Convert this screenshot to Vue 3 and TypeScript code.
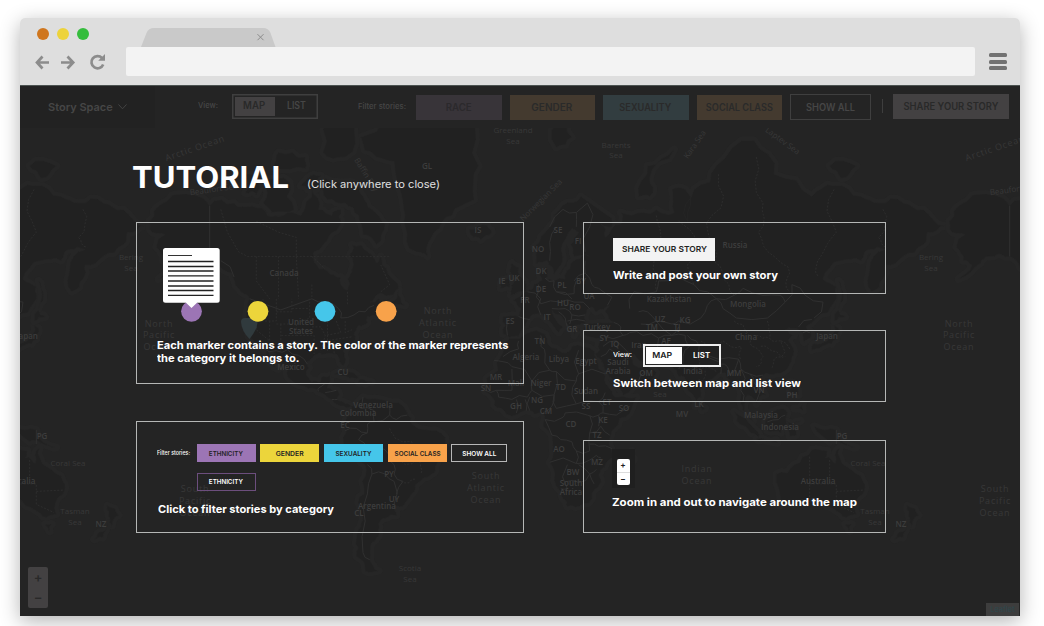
<script setup lang="ts">
import type { Directive } from 'vue'

type Point = [number, number]

// Stretches a label horizontally so that it occupies the given width.
const vFit: Directive<HTMLElement, number> = {
  mounted(el, { value }) {
    const natural = el.getBoundingClientRect().width
    if (natural > 0) el.style.transform = `scaleX(${value / natural})`
  },
}

const project = ([lon, lat]: Point): Point => [
  523 + lon * 2.2222,
  424 - 127.3 * Math.log(Math.tan(Math.PI / 4 + (lat * Math.PI) / 360)),
]

const noise = (x: number, y: number): number => {
  const n = Math.sin(x * 12.9898 + y * 78.233) * 43758.5453
  return n - Math.floor(n) - 0.5
}

const roughen = (pts: Point[], depth: number): Point[] => {
  if (depth === 0) return pts
  const out: Point[] = []
  for (let i = 0; i < pts.length - 1; i++) {
    const [ax, ay] = pts[i]
    const [bx, by] = pts[i + 1]
    const d = noise(ax + bx, ay + by) * 0.42
    out.push([ax, ay], [(ax + bx) / 2 - (by - ay) * d, (ay + by) / 2 + (bx - ax) * d])
  }
  out.push(pts[pts.length - 1])
  return roughen(out, depth - 1)
}

const parse = (s: string): Point[] =>
  s.split(' ').map((p) => p.split(',').map(Number) as Point)

const toPath = (s: string, closed: boolean, depth: number): string => {
  const pts = parse(s).map(project)
  if (closed) pts.push(pts[0])
  return 'M' + roughen(pts, depth).map(([x, y]) => `${x.toFixed(1)} ${y.toFixed(1)}`).join('L') + (closed ? 'Z' : '')
}

const land = [
  '-168,65.6 -166,68 -162,70 -156,71.3 -141,69.6 -130,70 -122,69.5 -115,68 -108,68 -100,68 -95,72 -92,69 -86,68 -82,69 -82,66.5 -87,64.5 -94,61 -94,58.7 -88,56.5 -82,55 -82,53 -79,51.5 -79,54.5 -77,57 -78,60 -77,62.5 -70,61 -66,58.5 -64,60 -61,56 -56,52 -60,50 -66,50 -69,48 -65,49 -64,46 -60,46 -66,43.5 -70,43.5 -70,41.5 -74,40.5 -76,37 -76,35 -81,31.5 -80,26.5 -81,25.2 -82.5,28 -84,30 -89,30 -94,29.5 -97.3,27 -97.5,22 -95,18.5 -91,18.7 -90,21 -87,21.3 -88,16 -83.5,15 -83.5,11 -80,9 -77.5,8 -80,7.5 -83,8.5 -86,11 -91,14 -95,16 -101,17.3 -105.5,20.3 -106,23 -109,26 -113,31 -114.5,31 -110,24 -112,26 -115,29 -117,32.5 -120.5,34.5 -124,40 -124,46 -123,49 -128,52 -131,56 -137,58.5 -145,60.5 -151,60 -154,58.5 -164,54.5 -158,58 -162,59 -165,62 -161,64.5',
  '-77.5,8 -72,12 -62,10.5 -52,5 -50,0 -44,-2.5 -35,-6 -35,-9 -39,-14 -39,-18 -41,-22 -48,-26 -49,-29 -53.5,-34 -58,-34.5 -57,-38 -62,-39 -65,-41 -65,-45 -68,-47 -69,-52 -65,-55 -71,-55 -75,-51 -75,-46 -73,-42 -73.5,-37 -71.5,-30 -70.5,-20 -76,-14 -81,-6 -80,-2 -80,1 -77,4',
  '-73,78 -66,76 -58,75.5 -54,70 -53,66 -48,61 -43,60 -40,65 -32,68 -22,70.5 -20,75 -18,80 -60,82',
  '-78,73 -72,71 -68,69 -62,66.5 -66,62.5 -72,64.5 -74,68 -80,70 -88,70.5 -89,73.5',
  '-117,73 -105,73 -103,69 -113,68.5 -117,70',
  '-125,74 -118,74.5 -120,71.3 -125,71.5',
  '-90,76.5 -80,76 -76,79 -90,80.5', '-110,76.5 -98,76 -98,74.7 -112,74.8', '-97,73.5 -91,73.8 -93,72 -100,72.5',
  '-24,65.5 -16,66.3 -14,65 -19,63.5 -22.5,64',
  '-5.5,50 1,51 1.5,53 -2,56 -2,57.5 -5,58.5 -6,56.5 -3,54.5 -5,52', '-10,52 -6,52.3 -6,55 -9.5,54.2',
  '-9,43.5 -2,43.5 -1,46 -4.5,48.5 2,51 5,53.2 8.5,54 8.3,57 10.5,57.5 10,54.5 14,54 19,54.5 21,57 24,59.3 30,60 23,60 21.5,62.5 25,65 22,65.7 17.3,61.5 17,58 14,55.5 11,59 6,58.3 5,62 12,66 18,69.7 26,71 40,67.5 40,66 35,66.5 37,64 44,66.5 44,68.5 54,68.5 60,69 68,68.5 67,72 73,72 74,67 77,72 87,75 104,77.7 113,74 130,71 140,72.5 152,71 160,70 171,70 180,69 190,66.2 182,65 180,62.5 171,60 163,58 162,54.5 157,51 156,57 163,61.5 156,61.5 152,59 143,59 135,54.5 141,52.5 140,48 132,43 127.5,40 129.3,36 126.5,34.5 126,38 121.5,39.5 118,39 122,37 119.5,35 122,31 120,26 114,22.3 108,21.5 106,19 109,13 105,9 101,13 99.5,9 103.5,1.5 100.5,5 98,9 97,17 91,22.5 87,21.5 80,15.5 80,12 77.5,8 73,17 72.5,21 70,21 67,25 57,26 56,27 50,30 48,30 51,25 56,26 60,22.5 55,17.5 45,12.8 42.5,16 39,21 35,28 32.5,30 34.5,31.5 36,36.5 30,36.5 27,38 29,41 41,41.5 37,45 39,47 33,45 31,46.5 28,44 28,41 23,40.5 23,37 19.5,41.5 13,45.5 18,40 16,38 12,42 8.5,44.4 3,43 0,39.5 -2,36.7 -6,36.2 -9,37.5',
  '-6,35.8 10,37.3 11,34 19,30.3 22,33 32,31.2 33,28 37,21 39,15.5 43,12 51,12 48,5 41,-2 39,-7 40.5,-15 35,-20 35,-24 32.5,-28 27,-33.8 20,-34.8 18,-32 15,-27 12,-17 13.5,-10 9,-1 9.5,4 5,4.5 2,6.3 -7.5,4.5 -13,8.5 -17,14.5 -16.5,20 -10,29',
  '44,-25 50,-15.5 49,-12 44,-17', '80,9 82,7 80.5,6',
  '95,5.5 104,-2 106,-6 100,-1', '105,-6.5 114,-7.2 114.5,-8.5 106,-7.5', '109,1.5 117,7 119,5 116,-4 110,-3', '119,1 125,1.5 121,0 123,-5 120,-5.5', '131,-1 141,-2.6 150,-10.5 143,-8.5 138,-8', '120,18.5 122,18 124,13 120,14', '122,7 126,9 126,6',
  '114,-22 122,-18 130,-11.5 137,-12 136,-15 140.5,-17.5 142.5,-10.7 146,-19 153,-25 153,-30 150,-37.5 144,-38.5 138,-35 132,-32 124,-33.5 115.5,-34.5', '145,-41 148,-41 147,-43.5',
  '173,-34.5 178,-38 175,-41.5 174,-39', '173,-40.7 171,-43.5 167,-46 171,-45.5',
  '130,31.5 131,34 137,35 140,40.5 142,39.5 141,35.5 136,33.5', '140,42 142,45.5 145,43.3', '142,46 142,54 144,51', '52,71 56,75 68,76.8 57,73.5 57,71', '15,77 22,78 16,80', '138,75 150,75 143,73.5',
  '-85,22 -78,22.8 -74,20.2 -78,20.2', '-73,19.8 -68,18.5 -74,18.3', '-60,47.5 -56,51.5 -53,47',
].map((s) => toPath(s, true, 2))

const borders = [
  '-123,49 -95,49 -89,48 -83,46 -82,43 -76,44 -71,45 -67,47', '-136,59 -130,55',
  '-117,32.5 -111,31.3 -106,31.7 -101,29.5 -97,26', '-92,14.5 -92,16 -89,18', '-89,14 -84,15', '-86,11 -83.5,11',
  '-72,12 -73,7 -67,6 -67,1 -70,0 -70,-4 -74,-7 -70,-11 -65,-10 -60,-14 -58,-18 -58,-22 -54,-25 -57,-30',
  '-80,-3 -75,-2 -70,-4', '-67,1 -60,4 -60,8', '-52,4 -57,2 -60,4', '-70,-18 -68,-22 -70,-30 -71,-40 -72,-50 -69,-52', '-68,-22 -62,-22 -58,-25 -58,-34',
  '12,66 18,69 24,68.5 29,70', '12,59 12,63 15,66', '24,66 24,68.5', '29,70 30,66 28,61', '28,59 28,56 31,53 34,52 40,49.5 38,47', '23,54 28,56', '14,54 15,51 23,50.5 24,54', '7,53 6,49.5 8,47.5', '10,54.7 14,54', '2,51 8,49 8,44', '-2,43.5 3,42.5', '-7,42 -7,37', '8,47.5 17,48 23,48 30,46', '15,51 22,49', '13,46 19,46 22,44 28,44', '20,42 28,42', '16,45 19,43 20,40', '22,44 21,41',
  '-13,27.5 -9,27 -5,25 4,19 12,23.5 15,23 24,19 25,22 25,31.5', '-2,35 -2,32 -9,29', '8,37 8,33 10,30 12,23.5', '25,22 37,22', '4,19 4,15 14,13 15,23', '24,19 22,13 24,9 34,10 37,14', '-17,15 -12,15 -5,15 -5,24', '-12,15 -11,12 -5,11 2,12 4,15', '-3,11 -3,5', '1,11 1.5,6', '3,12 3,6', '14,13 13,8 9,5', '14,13 15,7 24,9', '10,2 18,3 19,5 29,4 34,4 36,5 42,4 48,8', '34,10 36,5', '10,2 13,-5 17,-7 22,-8 24,-12 30,-12 30,-4 30,4', '30,-4 35,-1 39,-5', '34,4 34,-1', '12,-17 24,-17.5 24,-12', '24,-17.5 30,-16 33,-14 35,-15', '20,-18 20,-28 17,-28', '20,-25 25,-25.5 30,-22 32,-26', '25,-18 30,-22 33,-20', '30,-9 34,-10 40,-11',
  '36,37 45,37 44,40 41,41.5', '36,33 42,35 48,30', '35,29 39,32 46,29', '43,17 52,19 55,23', '45,37 48,38 54,37 61,36 61,30 61,25', '61,36 67,37 73,37 74,34 71,32 66,30 61,30', '48,46 50,51 60,51 61,54 70,55 77,53 83,51 87,49 95,50 99,52 108,50 116,50 118,48 110,43 96,43 90,46 87,49', '52,45 56,45 60,42 67,41 70,42 80,43 83,47 87,49', '53,41 60,42 67,37 70,40', '74,37 78,35 79,31 88,28 97,28 98,24 102,22 108,21.5', '70,24 72,29 75,33', '80,30 88,27', '89,22 89,26 92,25 93,22', '97,28 95,23 92,21', '98,24 100,20 98,15 99,10', '102,22 104,18 107,15 105,10', '118,48 121,53 127,50 135,48 131,43', '124,40 130,42.5', '126,38 129,38', '110,1 115,2 118,4',
].map((s) => toPath(s, false, 1)).concat([toPath('-141,69.6 -141,60', false, 0), toPath('141,-2.6 141,-9', false, 0)])

const provinces = [
  '-136,69 -133,65 -128,61 -124,60 -60,60', '-120,60 -120,54 -114,49', '-110,60 -110,49', '-102,60 -101,49', '-95,60 -89,57', '-95,53 -95,49', '-79,51 -79,47', '-120,67 -110,65 -102,64 -102,60', '-117,49 -117,42 -124,42', '-111,49 -111,42 -117,42', '-114,42 -114,35 -120,39 -120,42', '-111,45 -104,45 -104,49', '-111,41 -102,41 -96,43 -96,49', '-109,41 -109,31', '-102,41 -102,37 -109,37', '-104,46 -96.5,46', '-102,37 -94,37 -94,30', '-95,40 -91,40 -89,37 -91,31', '-88,42 -88,31', '-84,42 -82,38 -89,37', '-89,35 -77,36.5', '-85,35 -85,30', '-80,42 -80,38 -77,39',
  '-64,51 -60,53 -64,58', '129,-14.5 129,-32', '138,-16 138,-26 141,-26 141,-34 149,-37', '129,-26 138,-26', '141,-29 153,-28.5',
].map((s) => toPath(s, false, 0)).concat([
  '60,68 62,64 59,59 60,51', '70,67 78,63 74,58 77,53', '88,74 85,68 86,62 90,56 95,50', '105,76 108,70 106,65 113,60 120,56 120,51', '140,72 141,65 134,60 133,55', '162,69 160,64 164,62', '80,35 90,35 98,33 98,28', '95,42 101,38 103,33 108,29 105,25', '110,42 111,36 116,35 118,31 113,28 112,24', '105,37 111,36', '116,35 120,32', '107,33 114,31 118,29', '73,25 80,24 87,23', '76,18 81,19 82,24', '77,30 80,24', '-60,-2 -56,-7 -50,-8 -46,-15 -41,-12', '-60,-14 -53,-18 -47,-16 -46,-22', '-55,-25 -48,-24',
].map((s) => toPath(s, false, 2)))

interface Label { x: number; y: number; t: string; sea?: boolean; big?: boolean; r?: number }
const L = (x: number, y: number, t: string): Label => ({ x, y, t })
const S = (x: number, y: number, t: string, r = 0): Label => ({ x, y, t, r, sea: true })
const O = (x: number, y: number, t: string): Label => ({ x, y, t, sea: true, big: true })

const base: Label[] = [
  L(284, 276, 'Canada'), L(301, 325, 'United'), L(301, 334, 'States'), L(291, 370, 'Mexico'), L(343, 375, 'CU'),
  L(373, 408, 'Venezuela'), L(358, 416, 'Colombia'), L(345, 428, 'EC'), L(389, 477, 'PY'), L(394, 502, 'UY'), L(377, 509, 'Argentina'), L(359, 516, 'CL'),
  L(427, 169, 'GL'), L(478, 233, 'IS'), L(558, 233, 'SE'), L(578, 244, 'FI'), L(538, 252, 'NO'), L(541, 274, 'DK'), L(502, 284, 'IE'), L(514, 281, 'UK'), L(541, 292, 'DE'), L(562, 288, 'PL'), L(581, 284, 'BY'), L(589, 299, 'UA'), L(525, 303, 'FR'), L(563, 306, 'HU'), L(575, 310, 'RO'), L(547, 320, 'IT'), L(510, 324, 'ES'), L(572, 332, 'GR'), L(597, 330, 'Turkey'), L(604, 341, 'SY'), L(615, 347, 'IQ'), L(639, 348, 'Iran'), L(540, 344, 'TN'), L(526, 360, 'Algeria'), L(559, 362, 'Libya'), L(586, 364, 'Egypt'), L(618, 365, 'Saudi'), L(618, 374, 'Arabia'), L(646, 376, 'OM'), L(496, 380, 'MR'), L(516, 386, 'Mali'), L(541, 386, 'Niger'), L(561, 390, 'TD'), L(586, 394, 'Sudan'), L(486, 391, 'SN'), L(537, 403, 'NG'), L(516, 409, 'GH'), L(607, 405, 'ET'), L(624, 411, 'SO'), L(586, 409, 'SS'), L(546, 414, 'CM'), L(571, 427, 'CD'), L(603, 423, 'KE'), L(597, 438, 'TZ'), L(559, 452, 'AO'), L(597, 465, 'MZ'), L(573, 475, 'BW'), L(571, 486, 'South'), L(571, 495, 'Africa'),
  L(735, 248, 'Russia'), L(669, 302, 'Kazakhstan'), L(748, 307, 'Mongolia'), L(660, 322, 'UZ'), L(685, 323, 'KG'), L(652, 330, 'TM'), L(677, 330, 'TJ'), L(666, 344, 'AF'), L(746, 340, 'China'), L(693, 374, 'India'), L(734, 376, 'MM'), L(759, 393, 'VN'), L(792, 398, 'PH'), L(699, 407, 'LK'), L(682, 417, 'MV'), L(827, 339, 'Japan'), L(761, 418, 'Malaysia'), L(780, 430, 'Indonesia'), L(842, 439, 'PG'), L(818, 484, 'Australia'), L(901, 527, 'NZ'),
  S(513, 133, 'Greenland'), S(513, 144, 'Sea'), S(616, 148, 'Barents'), S(616, 158, 'Sea'), S(364, 176, 'Baffin Bay', 58), S(543, 202, 'Norwegian Sea', -45), S(697, 146, 'Kara Sea', -55), S(781, 143, 'Laptev Sea', 36), S(214, 192, 'Beaufort Sea', -8), S(931, 260, 'Bering'), S(931, 271, 'Sea'), S(660, 397, 'Sea'), S(868, 466, 'Coral Sea'), S(875, 514, 'Tasman'), S(875, 525, 'Sea'), S(410, 571, 'Scotia'), S(410, 582, 'Sea'),
  O(959, 327, 'North'), O(959, 338, 'Pacific'), O(959, 350, 'Ocean'), O(438, 314, 'North'), O(438, 326, 'Atlantic'), O(438, 338, 'Ocean'), O(486, 479, 'South'), O(486, 491, 'Atlantic'), O(486, 503, 'Ocean'), O(697, 472, 'Indian'), O(697, 484, 'Ocean'), O(995, 492, 'South'), O(995, 504, 'Pacific'), O(995, 516, 'Ocean'),
  { x: 196, y: 151, t: 'Arctic Ocean', sea: true, big: true, r: -19 },
]
const wraps = [-800, 0, 800]
// The world repeats every 800px; keep only the copies whose anchor is in view.
const labels = wraps
  .flatMap((dx) => base.map((l) => ({ ...l, x: l.x + dx })))
  .filter((l) => l.x > 16 && l.x < 1018)

const navFilters = [
  { name: 'RACE', tone: 'race', w: 26 }, { name: 'GENDER', tone: 'warm', w: 41 },
  { name: 'SEXUALITY', tone: 'cool', w: 52 }, { name: 'SOCIAL CLASS', tone: 'warm', w: 67 },
]
const chips = [
  { name: 'ETHNICITY', tone: 'purple', w: 34 }, { name: 'GENDER', tone: 'yellow', w: 28 },
  { name: 'SEXUALITY', tone: 'blue', w: 36 }, { name: 'SOCIAL CLASS', tone: 'orange', w: 46 }, { name: 'SHOW ALL', tone: 'outline', w: 34 },
]
</script>

<template>
  <div class="stage">
    <div class="window">
      <header class="chrome">
        <div class="tabs">
          <i class="light red" /><i class="light amber" /><i class="light green" />
          <svg class="tab" width="136" height="19" viewBox="0 0 136 19">
            <path d="M0 19L5.500 5Q7.500 0 13 0H122Q127.500 0 129.500 5L134.500 19Z" fill="#c9c9c9" />
            <path d="M116.500 6.200L122.500 12.200M122.500 6.200L116.500 12.200" stroke="#8c8c8c" stroke-width="1" />
          </svg>
        </div>
        <div class="tools">
          <svg width="76" height="18" viewBox="0 0 76 18" fill="none" stroke="#8c8c8c" stroke-width="2.700">
            <path d="M14 9.500H2.500M7.500 3.500L2 9.500L7.500 15.500M26 9.500H38M32.500 3.500L38.200 9.500L32.500 15.500" />
            <path d="M67 5A6.100 6.100 0 1 0 68.200 11.500" />
            <path d="M70 1V7.800H63.200Z" fill="#8c8c8c" stroke="none" />
          </svg>
          <div class="address" />
          <div class="menu"><i /><i /><i /></div>
        </div>
      </header>

      <main class="app">
        <svg class="map" width="1000" height="531" viewBox="20 85 1000 531">
          <g v-for="dx in wraps" :key="dx" :transform="`translate(${dx} 0)`">
            <g class="halo"><path v-for="(d, i) in land" :key="i" :d="d" /></g>
            <g class="land"><path v-for="(d, i) in land" :key="i" :d="d" /></g>
            <g class="border"><path v-for="(d, i) in borders" :key="i" :d="d" /></g>
            <g class="province"><path v-for="(d, i) in provinces" :key="i" :d="d" /></g>
          </g>
          <text
            v-for="(l, i) in labels" :key="i" :x="l.x" :y="l.y"
            :class="{ sea: l.sea, big: l.big }" :transform="l.r ? `rotate(${l.r} ${l.x} ${l.y})` : undefined"
          >{{ l.t }}</text>
          <path d="M241 322Q241 318 245 318H253Q257.500 318 257.500 323Q257 330 249.500 339Q241.500 331 241 322Z" fill="#303a3d" />
        </svg>

        <nav class="nav">
          <div class="brand">
            <span v-fit="65" class="fit brand-name">Story Space</span>
            <svg width="9" height="6" viewBox="0 0 9 6"><path d="M.5 .5L4.500 4.800L8.500 .5" fill="none" stroke="#444" /></svg>
          </div>
          <span class="nav-label view"><span v-fit="20" class="fit">View:</span></span>
          <div class="toggle dim"><b><span v-fit="22" class="fit mid">MAP</span></b><b><span v-fit="19" class="fit mid">LIST</span></b></div>
          <span class="nav-label stories"><span v-fit="48" class="fit">Filter stories:</span></span>
          <div class="nav-filters">
            <span v-for="f in navFilters" :key="f.name" class="nav-chip" :class="f.tone"><span v-fit="f.w" class="fit mid">{{ f.name }}</span></span>
          </div>
          <span class="nav-all"><span v-fit="49" class="fit mid">SHOW ALL</span></span>
          <i class="rule" />
          <span class="nav-share"><span v-fit="95" class="fit mid">SHARE YOUR STORY</span></span>
        </nav>

        <section class="tutorial">
          <div class="heading">
            <h1><span v-fit="157" class="fit">TUTORIAL</span></h1>
            <p><span v-fit="133" class="fit">(Click anywhere to close)</span></p>
          </div>
          <div class="columns">
            <div class="column left">
              <article class="card markers">
                <svg width="250" height="76" viewBox="0 0 250 76">
                  <circle cx="35.500" cy="64.300" r="10.400" fill="#9c75b5" />
                  <circle cx="102" cy="64.300" r="10.400" fill="#ecd53b" />
                  <circle cx="169" cy="64.300" r="10.400" fill="#45c6ea" />
                  <circle cx="230.200" cy="64.300" r="10.400" fill="#f8a24a" />
                  <g transform="translate(0 .8)">
                    <path d="M9.500 .300H61.200Q63.700 .300 63.700 2.800V52.500Q63.700 55 61.200 55H41L35.500 60.200L30 55H9.500Q7 55 7 52.500V2.800Q7 .300 9.500 .300Z" fill="#fff" />
                    <path d="M12 7.700H36" stroke="#333" />
                    <path d="M12 13.700H57.500M12 18.700H57.500M12 23.200H57.500M12 28H57.500M12 33.200H57.500M12 38.200H57.500M12 42.700H57.500M12 47.500H57.500" stroke="#222" stroke-width="1.300" />
                  </g>
                </svg>
                <p><span v-fit="351.500" class="fit">Each marker contains a story. The color of the marker represents</span><br><span v-fit="142.500" class="fit">the category it belongs to.</span></p>
              </article>
              <article class="card filter">
                <div class="chips">
                  <span class="tiny"><span v-fit="33" class="fit">Filter stories:</span></span>
                  <span v-for="c in chips" :key="c.name" class="chip" :class="c.tone"><span v-fit="c.w" class="fit mid">{{ c.name }}</span></span>
                </div>
                <span class="chip hollow"><span v-fit="34" class="fit mid">ETHNICITY</span></span>
                <p><span v-fit="176" class="fit">Click to filter stories by category</span></p>
              </article>
            </div>
            <div class="column right">
              <article class="card share">
                <span class="share-button"><span v-fit="85" class="fit mid">SHARE YOUR STORY</span></span>
                <p><span v-fit="165" class="fit">Write and post your own story</span></p>
              </article>
              <article class="card switch">
                <div class="switch-row">
                  <span class="small"><span v-fit="19" class="fit">View:</span></span>
                  <div class="toggle bright"><b><span v-fit="20" class="fit mid">MAP</span></b><b><span v-fit="17" class="fit mid">LIST</span></b></div>
                </div>
                <p><span v-fit="188" class="fit">Switch between map and list view</span></p>
              </article>
              <article class="card zoom">
                <div class="zoom-box"><div class="zoom-control"><b>+</b><b>−</b></div></div>
                <p><span v-fit="245" class="fit">Zoom in and out to navigate around the map</span></p>
              </article>
            </div>
          </div>
        </section>

        <div class="map-zoom"><span>+</span><span>−</span></div>
        <div class="credit">Leaflet</div>
      </main>
    </div>
  </div>
</template>

<style>
body { background: #fff; overflow: hidden; }
</style>

<style scoped>
* { box-sizing: border-box; }
p, h1 { margin: 0; }
b { font-weight: inherit; }
.stage { width: 1044px; height: 626px; padding: 18px 24px 10px 20px; overflow: hidden; background: #fff; font-family: Inter, "Liberation Sans", sans-serif; }
.window { width: 1000px; height: 598px; border-radius: 5px 5px 0 0; box-shadow: 0 5px 20px rgba(0, 0, 0, .3); }
.fit { display: inline-block; white-space: nowrap; transform-origin: left center; }
.fit.mid { transform-origin: center; }

.chrome { height: 67px; background: #dedede; border-radius: 5px 5px 0 0; }
.tabs { height: 29px; display: flex; align-items: flex-start; padding-left: 17px; }
.light { width: 12px; height: 12px; border-radius: 50%; margin: 10px 8px 0 0; }
.red { background: #cf761e; }
.amber { background: #edd33b; }
.green { background: #35bd3d; }
.tab { margin: 10px 0 0 44px; }
.tools { height: 29px; display: flex; align-items: center; padding-left: 15px; }
.address { width: 849px; height: 29px; margin-left: 15px; background: #f3f3f3; border-radius: 2px; }
.menu { display: flex; flex-direction: column; gap: 2.500px; margin-left: 14px; }
.menu i { width: 18px; height: 4px; border-radius: 1.500px; background: #727272; }

.app { position: relative; height: 531px; background: #242424; border-top: 1px solid #4c5351; overflow: hidden; }
.map { position: absolute; left: 0; top: -1px; }
.halo path { fill: none; stroke: #262626; stroke-width: 8; stroke-linejoin: round; }
.land path { fill: #212121; stroke: #262626; stroke-width: .6; }
.border path { fill: none; stroke: #303030; }
.province path { fill: none; stroke: #2d2d2d; stroke-dasharray: 2 1.500; }
.map text { fill: #3d3d3d; font: 600 8px "Open Sans", sans-serif; text-anchor: middle; }
.map text.sea { fill: #383838; font-weight: 400; }
.map text.big { font-size: 9px; letter-spacing: .8px; }

.nav { position: relative; display: flex; align-items: flex-start; height: 42px; background: #242424; font-size: 9.700px; font-weight: 600; color: #464646; }
.brand { width: 135px; height: 42px; display: flex; align-items: center; padding: 0 28px 0 28px; justify-content: space-between; background: #222; }
.brand-name { font-size: 11px; width: 65px; }
.nav-label { font-size: 7.500px; font-weight: 500; line-height: 12px; padding-top: 14px; }
.view { width: 34px; margin-left: 43px; }
.toggle { display: flex; border: 1px solid #3f3f3f; padding: 2px; }
.toggle b { flex: 1 1 0; display: flex; align-items: center; justify-content: center; }
.dim { width: 86px; height: 25px; margin-top: 8px; box-shadow: inset 0 0 0 .5px #3f3f3f; }
.dim b:first-child { background: #434142; color: #292929; padding-right: 2px; }
.dim b:last-child { padding-left: 3px; }
.dim b { line-height: 10px; padding-bottom: 1px; }
.stories { width: 58px; margin-left: 40px; padding-top: 15px; }
.nav-filters { display: flex; gap: 8px; margin-top: 8.500px; }
.nav-chip { width: 85.500px; height: 25px; display: flex; align-items: center; justify-content: center; color: #2a2a2a; }
.race { background: #383439; color: #2b292c; }
.warm { background: #443a2f; }
.cool { background: #323d40; }
.nav-all { width: 81px; height: 26px; margin: 8px 0 0 8px; border: 1px solid #3f3f3f; display: flex; align-items: center; justify-content: center; }
.rule { width: 1px; height: 14px; margin: 13px 0 0 11px; background: #3e3e3e; }
.nav-share { width: 116px; height: 25px; margin: 8px 0 0 10px; background: #434142; color: #292929; display: flex; align-items: center; justify-content: center; }

.tutorial { position: relative; padding: 31px 0 0 116px; color: #fff; }
.heading { display: flex; align-items: baseline; height: 63px; margin-left: -4px; }
h1 { width: 175px; font-size: 30px; line-height: 36px; font-weight: 700; }
.heading p { font-size: 10.600px; color: #e0e0e0; }
.columns { display: flex; gap: 59px; }
.column { display: flex; flex-direction: column; }
.left { width: 388px; gap: 37px; }
.right { width: 303px; }
.card { border: 1px solid #b5b7b6; }
.card p { font-size: 10.600px; font-weight: 700; line-height: 13px; }
.markers { height: 162px; padding: 24px 0 0 19px; }
.markers svg { display: block; }
.markers p { margin: 15.500px 0 0 .5px; }
.filter { height: 112px; padding: 22px 0 0 20px; }
.chips { display: flex; align-items: center; gap: 4.500px; }
.tiny { width: 35px; font-size: 5.800px; line-height: 8px; font-weight: 500; }
.chip { width: 59.200px; height: 18px; display: flex; align-items: center; justify-content: center; font-size: 6.200px; font-weight: 600; color: #222; }
.purple { background: #9c75b5; }
.yellow { background: #ecd53b; }
.blue { background: #45c6ea; }
.orange { background: #f8a24a; }
.outline { width: 55.500px; border: 1px solid #b7b7b7; color: #fff; }
.hollow { margin: 10.500px 0 0 39.500px; border: 1px solid #6c4e7d; color: #fff; }
.filter p { margin: 12px 0 0 1px; }
.share { height: 72px; padding: 15px 0 0 29px; }
.share-button { width: 102px; height: 22.500px; background: #f3f3f3; color: #222; font-size: 8px; font-weight: 600; display: flex; align-items: center; justify-content: center; }
.share p { margin-top: 8.500px; }
.switch { height: 72px; margin-top: 36px; padding: 13px 0 0 29px; }
.switch-row { display: flex; }
.small { width: 30px; font-size: 6.800px; line-height: 21px; font-weight: 500; }
.bright { width: 78px; height: 23px; border: 2px solid #eee; padding: 1px; font-size: 8px; font-weight: 600; }
.bright b { padding-bottom: 1px; }
.bright b:first-child { background: #fff; color: #222; padding-right: 3px; }
.bright b:last-child { padding-left: 3px; }
.switch p { margin-top: 10px; margin-left: -.5px; }
.zoom { height: 93px; margin-top: 38px; padding: 8px 0 0 28px; }
.zoom-box { width: 23px; height: 39px; background: #1f1f1f; padding: 10px 0 0 4.500px; }
.zoom-control { width: 13px; height: 26px; background: #fff; border-radius: 2px; color: #222; font-size: 8px; font-weight: 700; display: flex; flex-direction: column; }
.zoom-control b { height: 13px; line-height: 13px; text-align: center; }
.zoom-control b + b { border-top: 1px solid #ddd; }
.zoom p { margin-top: 8px; }

.map-zoom { position: absolute; left: 8px; bottom: 8px; width: 20px; height: 41px; border-radius: 2px; background: #434142; color: #292929; font-size: 13px; font-weight: 600; text-align: center; line-height: 20px; display: flex; flex-direction: column; }
.credit { position: absolute; right: 1px; bottom: 0; width: 33px; height: 13px; background: #3d3d3d; color: #2d484e; font-size: 7.500px; line-height: 13px; text-align: center; }
</style>
